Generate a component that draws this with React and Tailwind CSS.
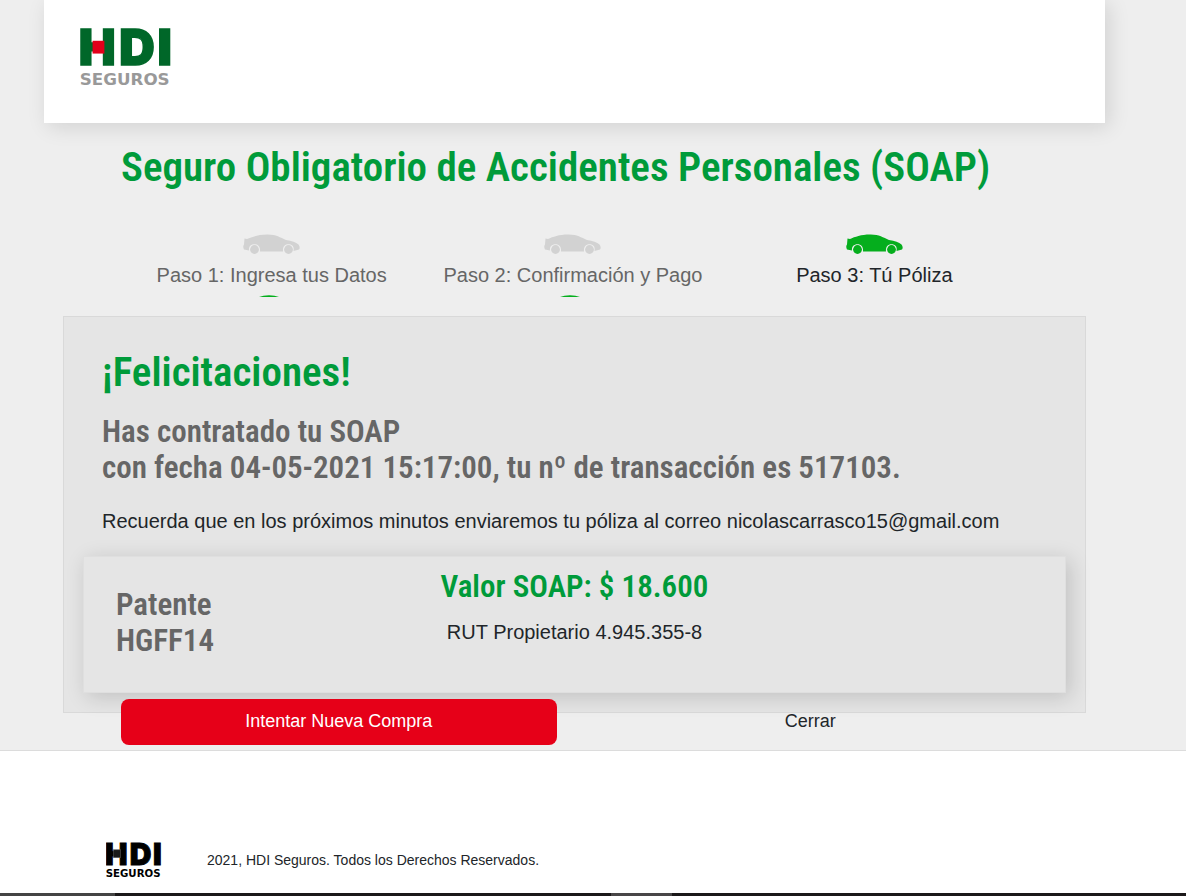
const HEADING = "font-['Roboto_Condensed','Open_Sans_Condensed',sans-serif] font-semibold";

function Logo({ className, markClass, wordClass, barClass }) {
  return (
    <svg viewBox="0 0 94 60" className={className} role="img" aria-label="HDI Seguros">
      <text y="38" fontSize="50" strokeWidth="1.600" className={`font-['Inter',sans-serif] font-black ${markClass}`}>
        <tspan x="-2">H</tspan>
        <tspan x="39">D</tspan>
        <tspan x="78">I</tspan>
      </text>
      <rect x="12" y="13" width="12" height="13" className={barClass} />
      <text x="-1" y="58" fontSize="17" className={`font-['DejaVu_Sans',sans-serif] font-bold ${wordClass}`}>SEGUROS</text>
    </svg>
  );
}

function Car({ className }) {
  return (
    <svg viewBox="0 0 57 20" className={className} aria-hidden="true">
      <path
        fill="currentColor"
        d="M1.500 4.500 L4 5 C9 3 15 0.600 24 0.600 C33 0.400 37 3.500 43 6 C49 6.800 53 8.500 55.500 10.500 C57 12.500 57 14.500 56 15.500 L50.500 17 C51.500 12.500 49 10.300 45.500 10.300 C42 10.300 39.500 12.500 40 17.500 L17 17.500 C17.500 12.500 15 10.300 11.500 10.300 C8 10.300 5.500 12.500 6 16.500 L1 15.500 C0 13 0 12 1 10.500 Z"
      />
      <circle cx="11.500" cy="15.500" r="4.400" fill="currentColor" />
      <circle cx="45.500" cy="15.500" r="4.400" fill="currentColor" />
    </svg>
  );
}

const steps = [
  { label: "Paso 1: Ingresa tus Datos", active: false },
  { label: "Paso 2: Confirmación y Pago", active: false },
  { label: "Paso 3: Tú Póliza", active: true },
];

function Step({ label, active }) {
  return (
    <li className={`flex flex-col items-center text-xl leading-6 ${active ? "text-[#212529]" : "text-[#666]"}`}>
      <Car className={`h-5 w-[57px] ${active ? "text-[#05ae1d]" : "text-[#d2d2d2]"}`} />
      <span className="mt-[9px]">{label}</span>
      {!active && (
        <svg viewBox="0 0 20 2" className="mt-2 mr-1.5 h-0.5 w-5" aria-hidden="true">
          <path d="M0 2 Q4 0.300 10 0.300 Q16 0.300 20 2 Z" fill="#05ae1d" />
        </svg>
      )}
    </li>
  );
}

export default function App() {
  return (
    <div className="flex min-h-screen flex-col bg-white font-['Liberation_Sans',Arial,sans-serif] text-[#212529]">
      <div className="border-b border-[#dcdcdc] bg-[#eee] pr-[37px] pb-[5px]">
        <div className="mx-11">
          <header className="bg-white px-9 pt-7 pb-9 shadow-[4px_4px_20px_rgba(0,0,0,0.12)]">
            <Logo className="h-[59px] w-[94px]" markClass="fill-[#006729] stroke-[#006729]" wordClass="fill-[#999]" barClass="fill-[#e2001a]" />
          </header>

          <main>
            <div className="px-[77px] pt-5">
              <h1 className={`${HEADING} text-[41px] leading-12 text-[#009b3a]`}>
                Seguro Obligatorio de Accidentes Personales (SOAP)
              </h1>
              <ol className="mt-[43px] grid h-[82px] grid-cols-3 pr-[3px]">
                {steps.map((s) => (
                  <Step key={s.label} {...s} />
                ))}
              </ol>
            </div>

            <section className="mx-[19px] border border-[#d9d9d9] bg-[#e5e5e5] px-[19px] pt-[31px] pb-[19px]">
              <div className="px-[19px]">
                <h2 className={`${HEADING} text-[41px] leading-12 text-[#009b3a]`}>¡Felicitaciones!</h2>
                <p className={`${HEADING} mt-[18px] text-[31px] leading-9 text-[#666]`}>
                  Has contratado tu SOAP
                  <br />
                  con fecha 04-05-2021 15:17:00, tu nº de transacción es 517103.
                </p>
                <p className="mt-5 text-xl leading-[30px]">
                  Recuerda que en los próximos minutos enviaremos tu póliza al correo nicolascarrasco15@gmail.com
                </p>
              </div>
              <div className="mt-5 grid grid-cols-3 border border-[#dfdfdf] bg-[#e5e5e5] pt-3 pb-[33px] shadow-[4px_4px_20px_rgba(0,0,0,0.16)]">
                <p className={`${HEADING} mt-[18px] pl-8 text-[31px] leading-9 text-[#666]`}>
                  Patente
                  <br />
                  HGFF14
                </p>
                <div className="text-center">
                  <h3 className={`${HEADING} text-[31px] leading-9 text-[#009b3a]`}>Valor SOAP: $ 18.600</h3>
                  <p className="mt-3 text-xl leading-[30px]">RUT Propietario 4.945.355-8</p>
                </div>
              </div>
            </section>

            <div className="relative -mt-3.5 grid grid-cols-2 gap-9 px-[77px] text-lg leading-6">
              <button type="button" className="h-[46px] rounded-lg bg-[#e60018] pb-0.5 text-white">
                Intentar Nueva Compra
              </button>
              <button type="button" className="h-[46px] pb-0.5">
                Cerrar
              </button>
            </div>
          </main>
        </div>
      </div>

      <footer className="flex flex-1 items-end gap-11 pb-[15px] pl-[106px]">
        <Logo className="h-9 w-[57px]" markClass="fill-black stroke-black" wordClass="fill-black" barClass="fill-[#1a1a1a] stroke-[#555]" />
        <p className="pb-2 text-sm leading-5">2021, HDI Seguros. Todos los Derechos Reservados.</p>
      </footer>
      <div className="flex h-[3px] bg-[#1b1819]">
        <div className="w-[115px] bg-[#444]" />
        <div className="ml-[496px] w-[61px] bg-[#484647]" />
      </div>
    </div>
  );
}
